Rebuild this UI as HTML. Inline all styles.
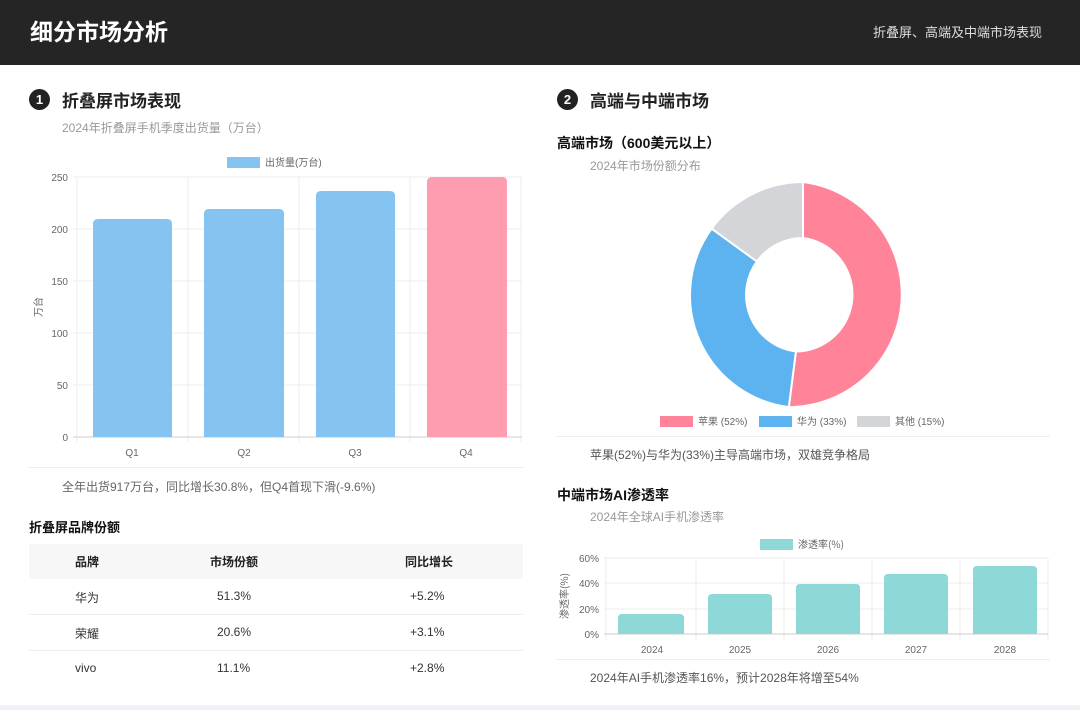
<!DOCTYPE html>
<html><head><meta charset="utf-8"><style>
*{margin:0;padding:0;box-sizing:border-box}
body{width:1080px;height:710px;background:#fff;font-family:"Liberation Sans","Noto Sans CJK SC",sans-serif;position:relative;overflow:hidden;color:#222}
.a{position:absolute;white-space:nowrap}
.hdr{position:absolute;left:0;top:0;width:1080px;height:65px;background:#252525}
.num{position:absolute;width:21px;height:21px;border-radius:50%;background:#222;color:#fff;font-size:13px;font-weight:bold;text-align:center;line-height:21px}
.h2{font-size:17px;font-weight:bold;color:#222}
.sub{font-size:12px;color:#999}
.note{font-size:12px;color:#555}
.h3{font-size:14px;font-weight:bold;color:#111}
.td{font-size:12px;color:#333}
.th{font-size:12px;font-weight:bold;color:#222}
</style></head><body>
<div class="hdr"></div>
<div class="a" style="left:30px;top:13px;font-size:23px;font-weight:bold;color:#fff">细分市场分析</div>
<div class="a" style="left:873px;top:22px;font-size:13px;color:#ddd">折叠屏、高端及中端市场表现</div>

<div class="num" style="left:29px;top:89px">1</div>
<div class="a h2" style="left:62px;top:87px">折叠屏市场表现</div>
<div class="a sub" style="left:62px;top:119px">2024年折叠屏手机季度出货量（万台）</div>

<svg class="a" style="left:0;top:140px" width="540" height="325" viewBox="0 140 540 325">
<rect x="227" y="157" width="33" height="11" fill="#85c3f0"/>
<text x="265" y="166" font-size="10" fill="#666" font-family="Liberation Sans,Noto Sans CJK SC,sans-serif">出货量(万台)</text>
<g stroke="#ececec" stroke-width="1">
<line x1="73" y1="177" x2="522" y2="177"/><line x1="73" y1="229" x2="522" y2="229"/><line x1="73" y1="281" x2="522" y2="281"/><line x1="73" y1="333" x2="522" y2="333"/><line x1="73" y1="385" x2="522" y2="385"/>
<line x1="77" y1="177" x2="77" y2="442"/><line x1="188" y1="177" x2="188" y2="442"/><line x1="299" y1="177" x2="299" y2="442"/><line x1="410" y1="177" x2="410" y2="442"/><line x1="521" y1="177" x2="521" y2="442"/>
</g>
<line x1="73" y1="437" x2="522" y2="437" stroke="#ccc"/>
<g font-size="10" fill="#666" text-anchor="end" font-family="Liberation Sans,sans-serif">
<text x="68" y="181">250</text><text x="68" y="233">200</text><text x="68" y="285">150</text><text x="68" y="337">100</text><text x="68" y="389">50</text><text x="68" y="441">0</text></g>
<text transform="translate(42,307) rotate(-90)" font-size="10" fill="#666" text-anchor="middle" font-family="Noto Sans CJK SC,sans-serif">万台</text>
<path d="M93 437V224q0-5 5-5h69q5 0 5 5V437z" fill="#85c3f0"/>
<path d="M204 437V214q0-5 5-5h70q5 0 5 5V437z" fill="#85c3f0"/>
<path d="M316 437V196q0-5 5-5h69q5 0 5 5V437z" fill="#85c3f0"/>
<path d="M427 437V182q0-5 5-5h70q5 0 5 5V437z" fill="#fe9db0"/>
<g font-size="10" fill="#666" text-anchor="middle" font-family="Liberation Sans,sans-serif">
<text x="132" y="456">Q1</text><text x="244" y="456">Q2</text><text x="355" y="456">Q3</text><text x="466" y="456">Q4</text></g>
</svg>
<div class="a" style="left:29px;top:467px;width:494px;border-top:1px solid #eee"></div>
<div class="a note" style="left:62px;top:478px;color:#666">全年出货917万台，同比增长30.8%，但Q4首现下滑(-9.6%)</div>

<div class="a h3" style="left:29px;top:517px;font-size:13px">折叠屏品牌份额</div>
<div class="a" style="left:29px;top:544px;width:494px;height:35px;background:#f7f7f7"></div>
<div class="a" style="left:29px;top:614px;width:494px;border-top:1px solid #eee"></div>
<div class="a" style="left:29px;top:650px;width:494px;border-top:1px solid #eee"></div>
<div class="a th" style="left:75px;top:553px">品牌</div>
<div class="a th" style="left:210px;top:553px">市场份额</div>
<div class="a th" style="left:405px;top:553px">同比增长</div>
<div class="a td" style="left:75px;top:589px">华为</div><div class="a td" style="left:217px;top:589px">51.3%</div><div class="a td" style="left:410px;top:589px">+5.2%</div>
<div class="a td" style="left:75px;top:625px">荣耀</div><div class="a td" style="left:217px;top:625px">20.6%</div><div class="a td" style="left:410px;top:625px">+3.1%</div>
<div class="a td" style="left:75px;top:661px">vivo</div><div class="a td" style="left:217px;top:661px">11.1%</div><div class="a td" style="left:410px;top:661px">+2.8%</div>

<div class="num" style="left:557px;top:89px">2</div>
<div class="a h2" style="left:590px;top:87px">高端与中端市场</div>
<div class="a h3" style="left:557px;top:133px">高端市场（600美元以上）</div>
<div class="a sub" style="left:590px;top:157px">2024年市场份额分布</div>

<svg class="a" style="left:540px;top:170px" width="540" height="270" viewBox="540 170 540 270">
<g stroke="#fff" stroke-width="2">
<path d="M803 182A113 113 0 0 1 788.8 407.1L795.9 351.5A57 57 0 0 0 803 238Z" fill="#ff8499"/>
<path d="M788.8 407.1A113 113 0 0 1 711.6 228.6L756.9 261.5A57 57 0 0 0 795.9 351.5Z" fill="#5db3ef"/>
<path d="M711.6 228.6A113 113 0 0 1 803 182L803 238A57 57 0 0 0 756.9 261.5Z" fill="#d4d5d9"/>
</g>
<g font-size="10" fill="#666" font-family="Liberation Sans,Noto Sans CJK SC,sans-serif">
<rect x="660" y="416" width="33" height="11" fill="#ff8499"/><text x="698" y="425">苹果 (52%)</text>
<rect x="759" y="416" width="33" height="11" fill="#5db3ef"/><text x="797" y="425">华为 (33%)</text>
<rect x="857" y="416" width="33" height="11" fill="#d4d5d9"/><text x="895" y="425">其他 (15%)</text>
</g></svg>
<div class="a" style="left:557px;top:436px;width:493px;border-top:1px solid #eee"></div>
<div class="a note" style="left:590px;top:446px">苹果(52%)与华为(33%)主导高端市场，双雄竞争格局</div>

<div class="a h3" style="left:557px;top:485px">中端市场AI渗透率</div>
<div class="a sub" style="left:590px;top:508px">2024年全球AI手机渗透率</div>
<svg class="a" style="left:540px;top:530px" width="540" height="130" viewBox="540 530 540 130">
<rect x="760" y="539" width="33" height="11" fill="#8fd8d8"/>
<text x="798" y="548" font-size="10" fill="#666" font-family="Noto Sans CJK SC,sans-serif">渗透率(%)</text>
<g stroke="#ececec">
<line x1="604" y1="558" x2="1048" y2="558"/><line x1="604" y1="583" x2="1048" y2="583"/><line x1="604" y1="609" x2="1048" y2="609"/>
<line x1="606" y1="558" x2="606" y2="640"/><line x1="696" y1="558" x2="696" y2="640"/><line x1="784" y1="558" x2="784" y2="640"/><line x1="872" y1="558" x2="872" y2="640"/><line x1="960" y1="558" x2="960" y2="640"/><line x1="1048" y1="558" x2="1048" y2="640"/>
</g>
<line x1="604" y1="634" x2="1048" y2="634" stroke="#ccc"/>
<g font-size="10" fill="#666" text-anchor="end" font-family="Liberation Sans,sans-serif">
<text x="599" y="562">60%</text><text x="599" y="587">40%</text><text x="599" y="613">20%</text><text x="599" y="638">0%</text></g>
<text transform="translate(568,596) rotate(-90)" font-size="10" fill="#666" text-anchor="middle" font-family="Noto Sans CJK SC,sans-serif">渗透率(%)</text>
<g fill="#8fd8d8">
<path d="M618 634V618q0-4 4-4h58q4 0 4 4V634z"/>
<path d="M708 634V598q0-4 4-4h56q4 0 4 4V634z"/>
<path d="M796 634V588q0-4 4-4h56q4 0 4 4V634z"/>
<path d="M884 634V578q0-4 4-4h56q4 0 4 4V634z"/>
<path d="M973 634V570q0-4 4-4h56q4 0 4 4V634z"/>
</g>
<g font-size="10" fill="#666" text-anchor="middle" font-family="Liberation Sans,sans-serif">
<text x="652" y="653">2024</text><text x="740" y="653">2025</text><text x="828" y="653">2026</text><text x="916" y="653">2027</text><text x="1005" y="653">2028</text></g>
</svg>
<div class="a" style="left:557px;top:659px;width:493px;border-top:1px solid #eee"></div>
<div class="a note" style="left:590px;top:669px">2024年AI手机渗透率16%，预计2028年将增至54%</div>
<div class="a" style="left:0;top:705px;width:1080px;height:5px;background:#f0f0f8"></div>
</body></html>
